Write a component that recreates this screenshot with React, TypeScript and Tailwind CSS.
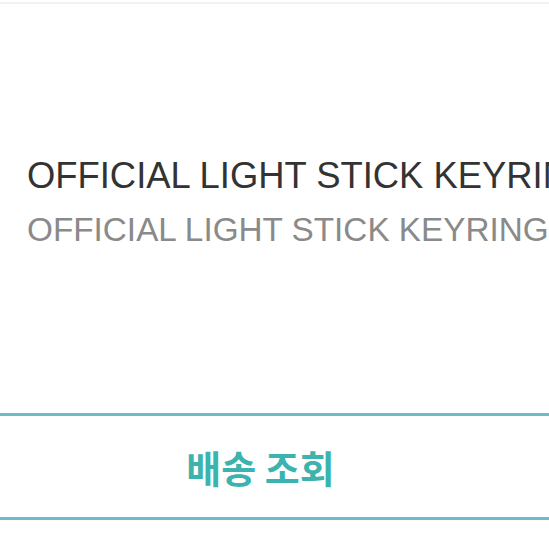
import React from 'react';

export default function App() {
  return (
    <div className="w-[549px] h-[549px] overflow-hidden bg-white flex flex-col" style={{ fontFamily: '"Liberation Sans", "Noto Sans CJK KR", sans-serif' }}>
      {/* top divider */}
      <div className="mt-[2px] h-[2px] bg-[#f2f2f2]" />

      {/* title block */}
      <div className="pt-[150px] pl-[27px] overflow-hidden">
        <h1 className="whitespace-nowrap text-[36.4px] leading-[44px] text-[#333333]">
          OFFICIAL LIGHT STICK KEYRING
        </h1>
        <p className="mt-[12px] whitespace-nowrap text-[33.3px] leading-[40px] text-[#8a8a8a]">
          OFFICIAL LIGHT STICK KEYRING
        </p>
      </div>

      {/* action button */}
      <button className="mt-auto mb-[29px] h-[107px] w-full border-y-[3px] border-[#6bbccb] flex items-center justify-center pr-[28px]">
        <span className="text-[38px] leading-[44px] font-bold text-[#3db3af]" style={{ fontFamily: '"Noto Sans CJK KR", sans-serif' }}>
          배송 조회
        </span>
      </button>
    </div>
  );
}
